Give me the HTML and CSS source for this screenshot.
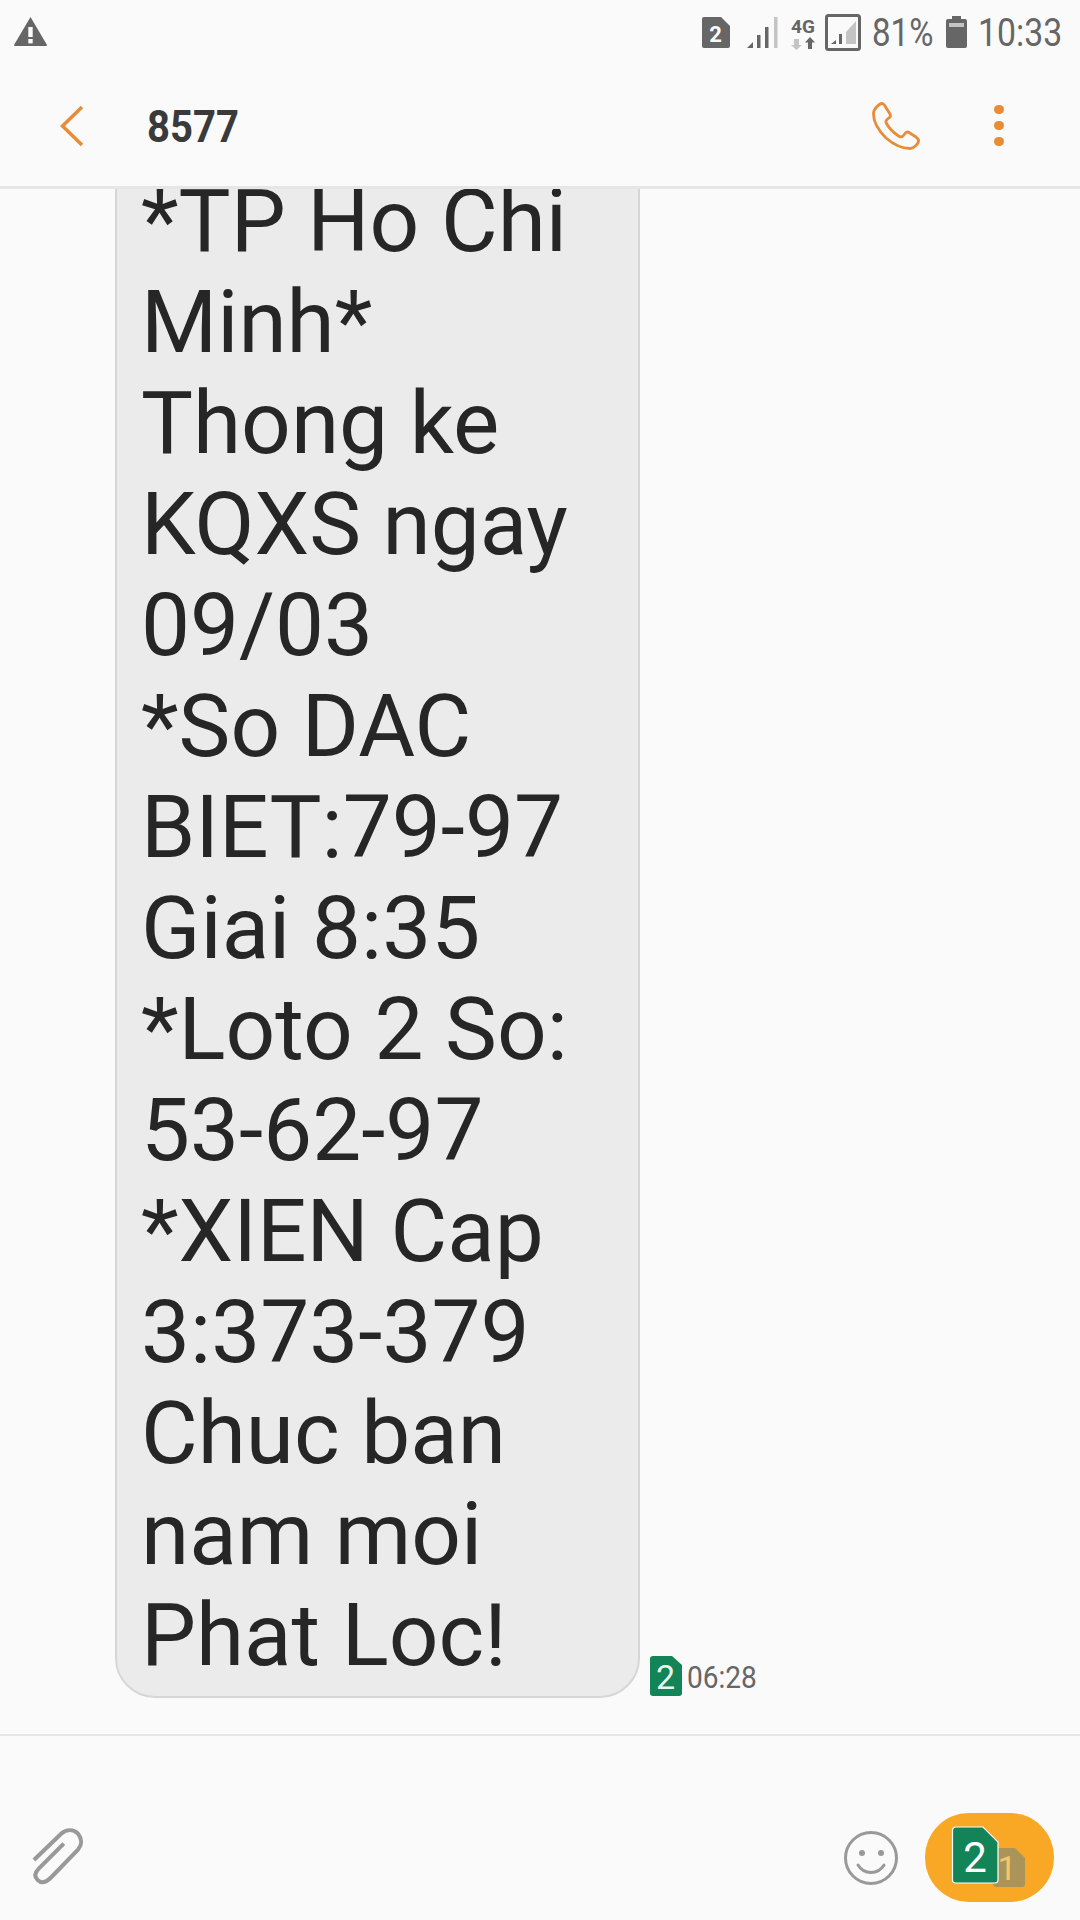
FILE: index.html
```html
<!DOCTYPE html>
<html lang="vi">
<head>
<meta charset="utf-8">
<title>8577</title>
<link rel="stylesheet" href="styles.css">
</head>
<body>
<div class="screen">
  <header class="topbar">
    <div class="status">
      <svg class="ic-warn" width="33" height="29" viewBox="0 0 33 29"><path d="M16.5 0 L33 28 Q33 29 32 29 L1 29 Q0 29 0 28 Z" fill="#666"/><rect x="14.3" y="10" width="4.4" height="10" fill="#fafafa"/><rect x="14.3" y="22" width="4.4" height="4.4" fill="#fafafa"/></svg>
      <div class="status-right">
        <svg class="ic-sim" width="28" height="31" viewBox="0 0 28 31"><path d="M2 0 H19 L28 9 V29 Q28 31 26 31 H2 Q0 31 0 29 V2 Q0 0 2 0 Z" fill="#666"/><text x="13.5" y="25" class="sim-digit-s">2</text></svg>
        <svg class="ic-signal" width="31" height="31" viewBox="0 0 31 31"><path d="M0 31 L6 25 V31 Z" fill="#666"/><rect x="10" y="18" width="3.5" height="13" fill="#666"/><rect x="18" y="10" width="3.5" height="21" fill="#666"/><rect x="27" y="0" width="3.5" height="31" fill="#c4c4c4"/></svg>
        <svg class="ic-4g" width="26" height="32" viewBox="0 0 26 32"><text x="13" y="15" class="net-label">4G</text><path d="M4 21 H9 V27 H12 L6.500 32 L1 27 H4 Z" fill="#c4c4c4"/><path d="M15 24.500 L20 19 L25 24.500 H22 V31 H18 V24.500 Z" fill="#666"/></svg>
        <svg class="ic-box" width="36" height="37" viewBox="0 0 36 37"><rect x="1.500" y="1.500" width="33" height="34" rx="2" fill="none" stroke="#666" stroke-width="3"/><path d="M6 30 L11 26 V30 Z" fill="#666"/><rect x="14" y="20" width="3" height="10" fill="#666"/><path d="M21 18 L31 7 V30 H21 Z" fill="#c4c4c4"/></svg>
        <span class="status-text pct">81%</span>
        <svg class="ic-batt" width="21" height="32" viewBox="0 0 21 32"><path d="M6 0 H15 V3 H19 Q21 3 21 5 V30 Q21 32 19 32 H2 Q0 32 0 30 V5 Q0 3 2 3 H6 Z" fill="#666"/><rect x="3" y="7" width="15" height="4" fill="#c4c4c4"/></svg>
        <span class="status-text clock">10:33</span>
      </div>
    </div>
    <div class="toolbar">
      <svg class="ic-back" width="24" height="42" viewBox="0 0 24 42"><path d="M22 2 L2.500 21 L22 40" fill="none" stroke="#e88c37" stroke-width="3.500"/></svg>
      <h1 class="contact">8577</h1>
      <svg class="ic-phone" width="48" height="48" viewBox="0 0 48 48"><path d="M10 1.500 C8 1.500 1.500 6 1.500 12 C1.500 20 7 29 14 36 C21 42 30 46.500 38 46.500 C42 46.500 47 41 46.500 38.500 C46.500 37 45 36 44 35 L37 30.500 C35.500 29.500 34 30 33 31.500 L31 34 C29.500 35.500 28 35 26.500 34 C22 31 17 26 14.500 21.500 C13.500 20 13.500 19 15 17.500 L17.500 15.500 C19 14.500 18.500 13 18 12 L13 4 C12 2.500 11.500 1.500 10 1.500 Z" fill="none" stroke="#e88c37" stroke-width="2.800" stroke-linejoin="round"/></svg>
      <div class="dots"><i></i><i></i><i></i></div>
    </div>
  </header>
  <main class="thread">
    <div class="msg-row">
      <div class="bubble">*TP Ho Chi<br>Minh*<br>Thong ke<br>KQXS ngay<br>09/03<br>*So DAC<br>BIET:79-97<br>Giai 8:35<br>*Loto 2 So:<br>53-62-97<br>*XIEN Cap<br>3:373-379<br>Chuc ban<br>nam moi<br>Phat Loc!</div>
      <div class="meta">
        <svg width="32" height="40" viewBox="0 0 32 40"><path d="M3 0 H22 L32 9 V37 Q32 40 29 40 H3 Q0 40 0 37 V3 Q0 0 3 0 Z" fill="#128457"/><text x="15.500" y="33" class="sim-digit-m">2</text></svg>
        <span class="time">06:28</span>
      </div>
    </div>
  </main>
  <footer class="composer">
    <svg class="ic-clip" width="52" height="58" viewBox="0 0 54 60"><path d="M2 32 L30 5 C36 0 43 0 48 5 C52 10 52 16 48 21 L20 50 C15 55 10 57 6 53 C2 49 3 45 7 41 L33 15" fill="none" stroke="#999" stroke-width="4.200"/></svg>
    <svg class="ic-smile" width="54" height="54" viewBox="0 0 54 54"><circle cx="27" cy="27" r="25.500" fill="none" stroke="#999" stroke-width="3"/><circle cx="18" cy="22" r="3" fill="#999"/><circle cx="37" cy="22" r="3" fill="#999"/><path d="M14 34 C20 44 34 44 40 34" fill="none" stroke="#999" stroke-width="3" stroke-linecap="round"/></svg>
    <div class="send">
      <svg width="129" height="89" viewBox="0 0 129 89">
        <path d="M72 35 H90 L100 45 V71 Q100 74 97 74 H72 Q68 74 68 71 Z" fill="#ab9459"/>
        <text x="82" y="67" class="sim-digit-back">1</text>
        <path d="M31 14 H58 L73 29 V67 Q73 70 70 70 H31 Q27.500 70 27.500 67 V18 Q27.500 14 31 14 Z" fill="#128457" stroke="#fff" stroke-width="1.200"/>
        <text x="50" y="59" class="sim-digit-l">2</text>
      </svg>
    </div>
  </footer>
</div>
</body>
</html>
```

FILE: styles.css
```css
* { box-sizing: border-box; }
html, body { margin: 0; padding: 0; }
body { background: #fafafa; font-family: Roboto, "Liberation Sans", sans-serif; }
svg { display: block; flex: none; overflow: visible; }

.screen { width: 1080px; height: 1920px; display: flex; flex-direction: column; overflow: hidden; background: #fafafa; }

.topbar { flex: none; height: 189px; border-bottom: 3px solid #e6e6e6; display: flex; flex-direction: column; }

.status { height: 62px; display: flex; justify-content: space-between; align-items: flex-start; padding: 0 18px 0 14px; }
.ic-warn { margin-top: 17px; }
.status-right { display: flex; align-items: flex-start; }
.ic-sim { margin-top: 17px; }
.ic-signal { margin-top: 17px; margin-left: 17px; }
.ic-4g { margin-top: 18px; margin-left: 12px; }
.ic-box { margin-top: 14px; margin-left: 9px; }
.status-text { color: #666; font-size: 38px; line-height: 66px; display: inline-block; transform-origin: left center; white-space: nowrap; }
.pct { width: 61px; margin-left: 11px; transform: scaleX(.87); }
.ic-batt { margin-top: 16px; margin-left: 13px; }
.clock { width: 84px; margin-left: 11px; transform: scaleX(.89); }
.sim-digit-s { font: 700 22px Roboto, sans-serif; fill: #fafafa; text-anchor: middle; }
.net-label { font: 700 19px Roboto, sans-serif; fill: #666; text-anchor: middle; }

.toolbar { flex: 1; display: flex; align-items: center; padding: 0 0 0 60px; }
.ic-back { margin-top: 4px; }
.contact { margin: 6px 0 0 63px; width: 91px; font-size: 45px; line-height: 60px; font-weight: 700; color: #3a3a3a; transform: scaleX(.89); transform-origin: left center; white-space: nowrap; }
.ic-phone { margin-left: 634px; margin-top: 3px; }
.dots { margin-left: 74px; display: flex; flex-direction: column; gap: 6.500px; margin-top: 3px; }
.dots i { display: block; width: 9.500px; height: 9.500px; border-radius: 50%; background: #e88c37; }

.thread { flex: 1; min-height: 0; overflow: hidden; display: flex; flex-direction: column; justify-content: flex-end; padding: 0 0 36px 115px; }
.msg-row { flex: none; display: flex; align-items: flex-end; }
.bubble { flex: none; width: 525px; padding: 30px 20px 10px 24px; background: #ebebeb; border: 2px solid #d6d6d6; border-radius: 0 0 40px 40px; font-size: 87.25px; line-height: 101px; color: #262626; white-space: nowrap; }
.meta { display: flex; align-items: flex-end; gap: 5px; margin-left: 10px; margin-bottom: 2px; }
.time { width: 70px; font-size: 31px; line-height: 36px; color: #666; transform: scaleX(.905); transform-origin: left center; white-space: nowrap; }
.sim-digit-m { font: 400 34px Roboto, sans-serif; fill: #e8f5ef; text-anchor: middle; }

.composer { flex: none; height: 186px; border-top: 2px solid #e6e6e6; display: flex; align-items: center; padding: 59px 26px 0 32px; }
.ic-clip { margin-top: 0; }
.ic-smile { margin-left: auto; }
.send { margin-left: 27px; width: 129px; height: 89px; border-radius: 44px; background: #f9a825; }
.sim-digit-l { font: 400 42px Roboto, sans-serif; fill: #fff; text-anchor: middle; }
.sim-digit-back { font: 400 34px Roboto, sans-serif; fill: #f5c56b; text-anchor: middle; }
```
